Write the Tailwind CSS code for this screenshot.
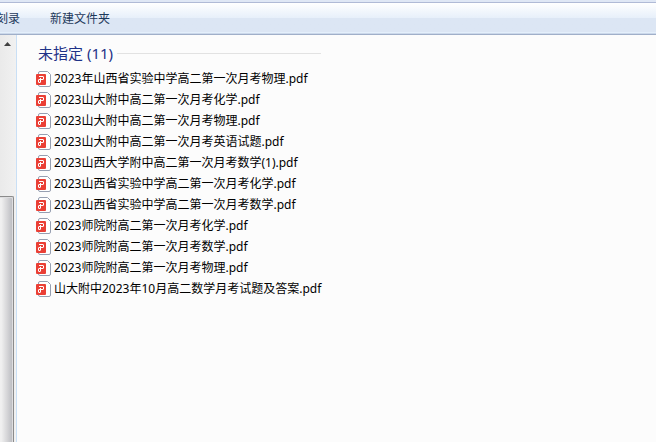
<!DOCTYPE html>
<html lang="zh-CN">
<head>
    <meta charset="UTF-8">
    <title>文件列表</title>
    <script src="https://cdn.jsdelivr.net/npm/@tailwindcss/browser@4"></script>
</head>
<body class="h-screen flex flex-col overflow-hidden bg-[#fcfcfc] text-black text-xs font-['Noto_Sans','Noto_Sans_CJK_SC',sans-serif]">

<!-- 工具栏 -->
<header class="shrink-0 bg-[#dfe7f5] pt-[2px]">
    <div class="h-[33px] flex items-center gap-[30px] overflow-hidden border-t border-t-[#b0bad6] border-b border-b-[#a0afc9] bg-linear-to-b from-white from-0% via-[#e6effa] via-50% to-[#dce6f4] to-50% text-[#1e395b] shadow-[inset_0_-1px_0_#cbd8ea,inset_0_-2px_0_#e4effb]">
        <button type="button" class="-ml-1 shrink-0">刻录</button>
        <button type="button" class="shrink-0">新建文件夹</button>
    </div>
</header>

<div class="flex-1 min-h-0 flex">
    <!-- 左侧滚动条 -->
    <aside class="w-[17px] shrink-0 flex flex-col border-r border-[#c9dff5] bg-linear-to-r from-[#eaeaea] to-[#f1f1f1]">
        <button type="button" aria-label="向上滚动" class="h-[17px] pl-[4px] flex items-center">
            <svg class="w-[7px] h-[4px]" viewBox="0 0 7 4">
                <path d="M3.5 0L7 4H0z" fill="#404040"/>
            </svg>
        </button>
        <div class="h-36 shrink-0"></div>
        <div class="flex-1 mr-[2px] border-t border-r border-[#8b8b8b] rounded-tr-xs bg-linear-to-r from-[#f0f0f0] from-10% via-[#d8d8da] via-50% to-[#b9babf] shadow-[inset_-1px_1px_0_#dedee0]"></div>
    </aside>

    <main class="flex-1 min-w-0 pl-[19px] pt-[6px]">
        <div class="w-[285px] pl-[2px] mb-[3px] flex items-center gap-1">
            <h2 class="text-[15px] leading-6 text-[#1e3287] whitespace-nowrap">未指定 (11)</h2>
            <div class="flex-1 h-px bg-[#e2e2e2]"></div>
        </div>

        <svg class="hidden">
            <symbol id="pdf" viewBox="0 0 15 16">
                <path d="M2.5 3V2Q2.5.5 4 .5H11.5L14.5 3.5V14Q14.5 15.5 13 15.5H4Q2.5 15.5 2.5 14V13" fill="#fff" stroke="#969fb1"/>
                <rect y="3" width="10" height="11" rx="1" fill="#ea3f35"/>
                <path d="M3 5.5H7Q7.5 5.5 7.5 6V8Q7.5 8.5 7 8.5H3Q2.5 8.5 2.5 9V11Q2.5 11.5 3 11.5H4Q4.5 11.5 4.5 11V7" fill="none" stroke="#fff"/>
            </symbol>
        </svg>

        <ul>
            <li class="h-[21px] flex items-center gap-[3px] whitespace-nowrap"><svg class="w-[15px] h-4"><use href="#pdf"/></svg>2023年山西省实验中学高二第一次月考物理.pdf</li>
            <li class="h-[21px] flex items-center gap-[3px] whitespace-nowrap"><svg class="w-[15px] h-4"><use href="#pdf"/></svg>2023山大附中高二第一次月考化学.pdf</li>
            <li class="h-[21px] flex items-center gap-[3px] whitespace-nowrap"><svg class="w-[15px] h-4"><use href="#pdf"/></svg>2023山大附中高二第一次月考物理.pdf</li>
            <li class="h-[21px] flex items-center gap-[3px] whitespace-nowrap"><svg class="w-[15px] h-4"><use href="#pdf"/></svg>2023山大附中高二第一次月考英语试题.pdf</li>
            <li class="h-[21px] flex items-center gap-[3px] whitespace-nowrap"><svg class="w-[15px] h-4"><use href="#pdf"/></svg>2023山西大学附中高二第一次月考数学(1).pdf</li>
            <li class="h-[21px] flex items-center gap-[3px] whitespace-nowrap"><svg class="w-[15px] h-4"><use href="#pdf"/></svg>2023山西省实验中学高二第一次月考化学.pdf</li>
            <li class="h-[21px] flex items-center gap-[3px] whitespace-nowrap"><svg class="w-[15px] h-4"><use href="#pdf"/></svg>2023山西省实验中学高二第一次月考数学.pdf</li>
            <li class="h-[21px] flex items-center gap-[3px] whitespace-nowrap"><svg class="w-[15px] h-4"><use href="#pdf"/></svg>2023师院附高二第一次月考化学.pdf</li>
            <li class="h-[21px] flex items-center gap-[3px] whitespace-nowrap"><svg class="w-[15px] h-4"><use href="#pdf"/></svg>2023师院附高二第一次月考数学.pdf</li>
            <li class="h-[21px] flex items-center gap-[3px] whitespace-nowrap"><svg class="w-[15px] h-4"><use href="#pdf"/></svg>2023师院附高二第一次月考物理.pdf</li>
            <li class="h-[21px] flex items-center gap-[3px] whitespace-nowrap"><svg class="w-[15px] h-4"><use href="#pdf"/></svg>山大附中2023年10月高二数学月考试题及答案.pdf</li>
        </ul>
    </main>
</div>

</body>
</html>
